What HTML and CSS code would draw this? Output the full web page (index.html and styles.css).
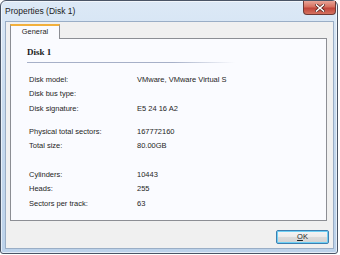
FILE: index.html
```html
<!DOCTYPE html>
<html lang="en">
<head>
    <meta charset="UTF-8">
    <title>Properties (Disk 1)</title>
    <link rel="stylesheet" href="styles.css">
</head>
<body>
    <div class="window">
        <!-- Title bar -->
        <div class="titlebar">
            <span class="title">Properties (Disk 1)</span>
            <div class="close">
                <svg width="10" height="8" viewBox="0 0 10 8">
                    <path d="M1.5 1 L8.5 7 M8.5 1 L1.5 7" stroke="#5a2620" stroke-width="3" stroke-linecap="square"/>
                    <path d="M1.5 1 L8.5 7 M8.5 1 L1.5 7" stroke="#ffffff" stroke-width="1.6" stroke-linecap="square"/>
                </svg>
            </div>
        </div>

        <!-- Client area -->
        <div class="client">
            <div class="tabs">
                <div class="tab">General</div>
            </div>
            <div class="pane">
                <div class="heading">Disk 1</div>
                <div class="rule"></div>

                <div class="group">
                    <div class="row"><span class="label">Disk model:</span><span class="value">VMware, VMware Virtual S</span></div>
                    <div class="row"><span class="label">Disk bus type:</span><span class="value"></span></div>
                    <div class="row last"><span class="label">Disk signature:</span><span class="value">E5 24 16 A2</span></div>
                </div>

                <div class="group second">
                    <div class="row"><span class="label">Physical total sectors:</span><span class="value">167772160</span></div>
                    <div class="row"><span class="label">Total size:</span><span class="value">80.00GB</span></div>
                </div>

                <div class="group third">
                    <div class="row"><span class="label">Cylinders:</span><span class="value">10443</span></div>
                    <div class="row"><span class="label">Heads:</span><span class="value">255</span></div>
                    <div class="row last"><span class="label">Sectors per track:</span><span class="value">63</span></div>
                </div>
            </div>
            <div class="buttons">
                <button class="btn"><u>O</u>K</button>
            </div>
        </div>
    </div>
</body>
</html>
```

FILE: styles.css
```css
body {
    margin: 0;
    background: #ffffff;
    font-family: "Liberation Sans", Arial, sans-serif;
}
.window {
    box-sizing: border-box;
    width: 338px;
    height: 254px;
    border: 1px solid #4a5566;
    border-radius: 6px 6px 3px 3px;
    background: linear-gradient(to bottom, #dce9f6 0%, #c9dcf0 40%, #bcd2ea 100%);
    box-shadow: inset 0 0 0 1px rgba(255, 255, 255, 0.6);
    display: flex;
    flex-direction: column;
}
.titlebar {
    height: 20px;
    display: flex;
    align-items: center;
    padding-left: 4px;
}
.title {
    font-size: 8.5px;
    color: #1c1c1c;
}
.close {
    box-sizing: border-box;
    width: 33px;
    height: 14px;
    margin-left: auto;
    margin-right: 1px;
    align-self: flex-start;
    border: 1px solid #6e3a35;
    border-top: none;
    border-radius: 0 0 4px 4px;
    background: linear-gradient(to bottom, #e8a598 0%, #d7705f 45%, #c0453a 55%, #d5725f 100%);
    display: flex;
    align-items: center;
    justify-content: center;
}
.client {
    flex: 1;
    margin: 0 3px 4px 4px;
    border: 1px solid #9aaec6;
    background: #f0f0f0;
    padding: 2px 6px 0 4px;
    display: flex;
    flex-direction: column;
}
.tabs {
    display: flex;
    position: relative;
    z-index: 1;
}
.tab {
    box-sizing: border-box;
    width: 50px;
    height: 15px;
    margin-bottom: -1px;
    border: 1px solid #8c8e94;
    border-bottom: none;
    border-top: 2px solid #f2b03c;
    background: #fafbff;
    font-size: 7.4px;
    color: #1e1e1e;
    text-align: center;
    line-height: 12px;
}
.pane {
    box-sizing: border-box;
    height: 183px;
    border: 1px solid #8c8e94;
    background: #fafbff;
    padding: 7px 16px 0 16px;
}
.heading {
    font-family: "Liberation Serif", "Times New Roman", serif;
    font-weight: bold;
    font-size: 9px;
    line-height: 12px;
    color: #1a1a1a;
    padding-bottom: 4px;
}
.rule {
    width: 208px;
    height: 1px;
    background: linear-gradient(to right, #a6b0c8 0%, #a6b0c8 70%, rgba(166, 176, 200, 0) 100%);
    margin-bottom: 9px;
}
.group {
    padding-left: 2px;
}
.group.second {
    margin-top: 9px;
}
.group.third {
    margin-top: 15px;
}
.row {
    display: flex;
    height: 14px;
    align-items: center;
    font-size: 7.5px;
    color: #1e1e1e;
}
.row.last {
    margin-top: 1px;
}
.label {
    width: 108px;
}
.buttons {
    display: flex;
    justify-content: flex-end;
    margin-top: 9px;
    margin-right: -2px;
}
.btn {
    box-sizing: border-box;
    width: 53px;
    height: 14px;
    padding: 0;
    border: 1px solid #3c7fb1;
    border-radius: 2px;
    box-shadow: inset 0 0 0 1px #6fd0f5;
    background: linear-gradient(to bottom, #f4f4f4 0%, #ececec 50%, #dcdcdc 51%, #d2d2d2 100%);
    font-family: "Liberation Sans", Arial, sans-serif;
    font-size: 7.5px;
    color: #1e1e1e;
    line-height: 12px;
}
```
